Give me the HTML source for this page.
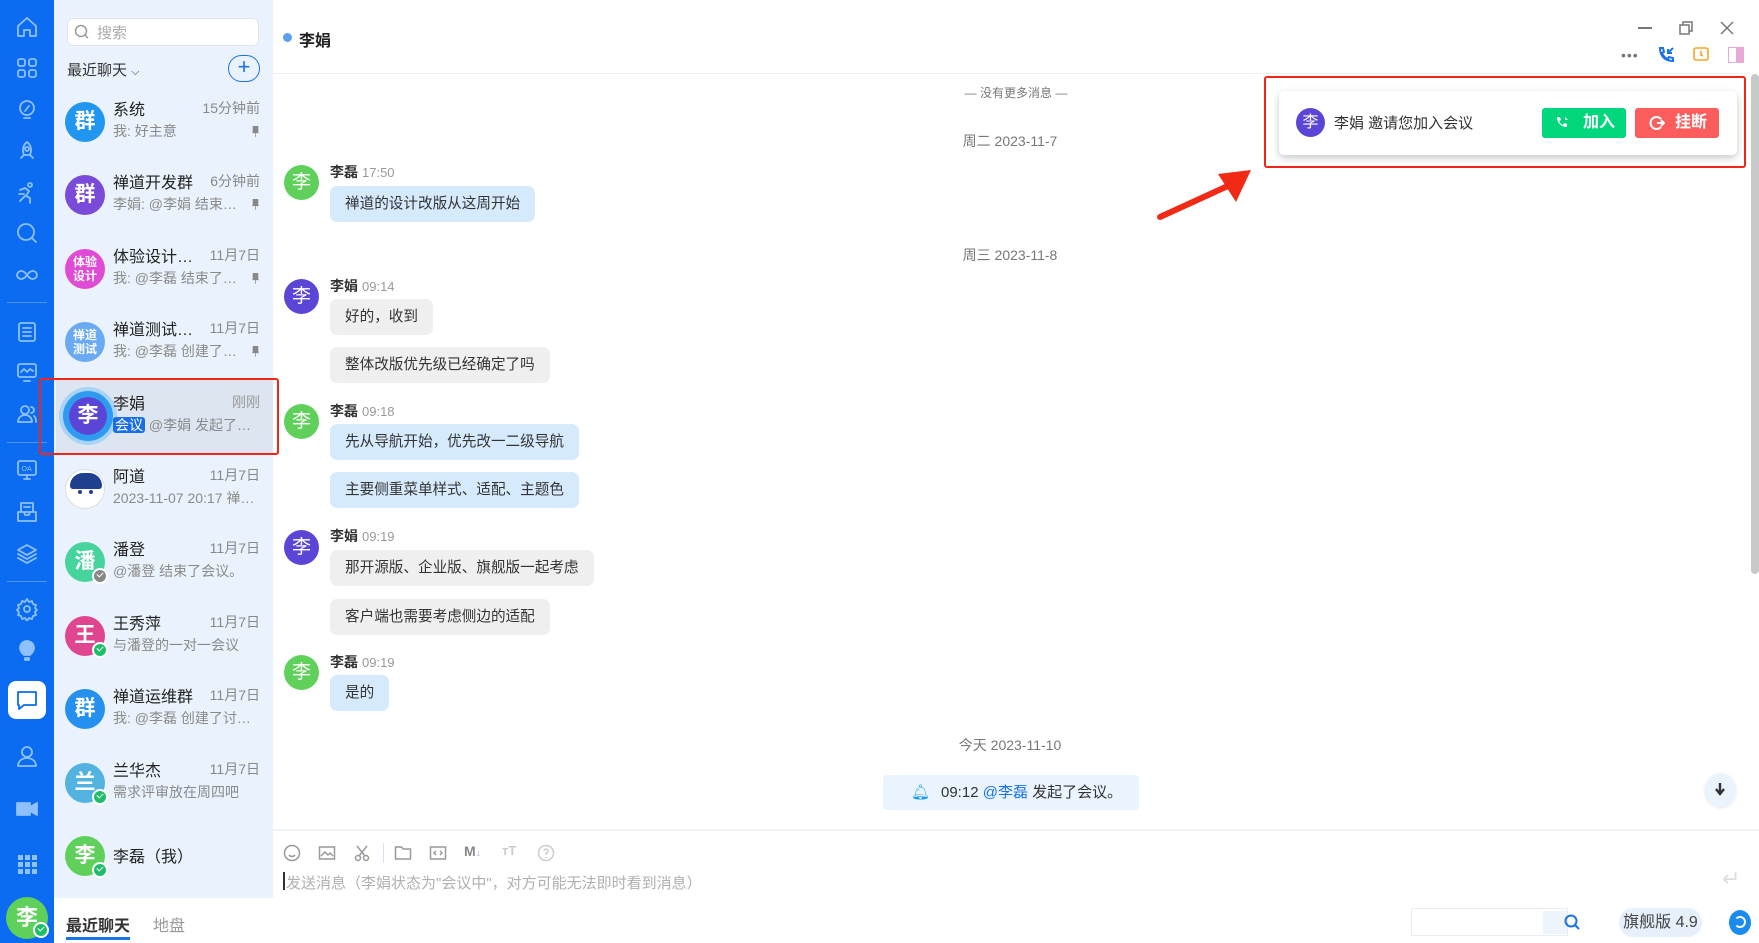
<!DOCTYPE html>
<html><head><meta charset="utf-8">
<style>
*{margin:0;padding:0;box-sizing:border-box}
body{width:1759px;height:943px;overflow:hidden;background:#fff;font-family:"Liberation Sans","Noto Sans CJK SC",sans-serif;position:relative;color:#222}
.abs{position:absolute}
#side{left:0;top:0;width:54px;height:943px;background:#0b6cf2}
#side svg{position:absolute;left:15px;width:24px;height:24px;fill:none;stroke:#8fc0ff;stroke-width:1.8;stroke-linecap:round;stroke-linejoin:round}
.sdiv{position:absolute;left:7px;width:40px;height:1px;background:#4d93f5}
#list{left:54px;top:0;width:219px;height:898px;background:#eaf3fd}
.item{position:absolute;left:0;width:219px;height:73px}
.av{position:absolute;border-radius:50%;color:#fff;text-align:center;font-weight:bold}
.item .av{left:11px;top:17px;width:40px;height:40px;line-height:40px;font-size:21px}
.nm{position:absolute;left:59px;top:11px;font-size:16px;color:#222}
.tm{position:absolute;right:13px;top:13px;font-size:14px;color:#888}
.pv{position:absolute;left:59px;top:36px;font-size:14px;color:#8a8a8a;white-space:nowrap}
.pin{position:absolute;right:14px;top:41px;width:7px;height:11px;background:#888;clip-path:polygon(10% 0,90% 0,90% 55%,100% 65%,55% 65%,55% 100%,45% 100%,45% 65%,0 65%,10% 55%)}
.badge{position:absolute;left:38px;top:43px;width:16px;height:16px;border-radius:50%;background:#1fbf6a;border:2px solid #fff}
.badge:after{content:"";position:absolute;left:3px;top:2px;width:5px;height:3px;border-left:1.5px solid #fff;border-bottom:1.5px solid #fff;transform:rotate(-45deg)}
.msgname{position:absolute;left:330px;font-size:14px;font-weight:bold;color:#333}
.msgname span{font-weight:normal;color:#999;font-size:13px;margin-left:4px}
.bub{position:absolute;left:330px;height:36px;line-height:36px;padding:0 15px;border-radius:7px;font-size:14.6px;color:#333}
.me{background:#d6eafe}.ot{background:#efefef}
.cav{position:absolute;left:284px;width:35px;height:35px;line-height:35px;font-size:19px;border-radius:50%;color:#fff;text-align:center}
.date{position:absolute;left:900px;width:220px;text-align:center;font-size:14px;color:#777}
.tb{position:absolute;top:844px;width:18px;height:18px;fill:none;stroke:#999;stroke-width:1.5}
</style></head><body>

<div id="side" class="abs">
<svg style="top:15px" viewBox="0 0 24 24"><path d="M3 11 12 3l9 8v10h-6v-6h-6v6H3z"/></svg>
<svg style="top:56px" viewBox="0 0 24 24"><rect x="3" y="3" width="7" height="7" rx="2"/><rect x="14" y="3" width="7" height="7" rx="2"/><rect x="3" y="14" width="7" height="7" rx="2"/><rect x="14" y="14" width="7" height="7" rx="2"/></svg>
<svg style="top:98px" viewBox="0 0 24 24"><circle cx="12" cy="10" r="7"/><path d="M9 20h6M10 13l4-5"/></svg>
<svg style="top:139px" viewBox="0 0 24 24"><path d="M12 3c4 3 5 8 3 13H9C7 11 8 6 12 3zM9 16l-3 3M15 16l3 3"/><circle cx="12" cy="10" r="2"/></svg>
<svg style="top:181px" viewBox="0 0 24 24"><circle cx="15" cy="4" r="2"/><path d="M5 9l5-2 4 3-3 5 4 2v5M10 15l-5 5M4 13h5"/></svg>
<svg style="top:221px" viewBox="0 0 24 24"><circle cx="11" cy="11" r="8"/><path d="M17 17l4 4"/></svg>
<svg style="top:263px" viewBox="0 0 24 24"><path d="M12 12c-2-3-4-4-6-4s-4 2-4 4 2 4 4 4 4-1 6-4zm0 0c2 3 4 4 6 4s4-2 4-4-2-4-4-4-4 1-6 4z"/></svg>
<div class="sdiv" style="top:302px"></div>
<svg style="top:320px" viewBox="0 0 24 24"><rect x="4" y="3" width="16" height="18" rx="2"/><path d="M8 8h8M8 12h8M8 16h8"/></svg>
<svg style="top:360px" viewBox="0 0 24 24"><rect x="3" y="4" width="18" height="13" rx="2"/><path d="M6 12l3-3 3 3 3-3 3 2M9 21h6"/></svg>
<svg style="top:402px" viewBox="0 0 24 24"><circle cx="10" cy="8" r="4"/><path d="M3 20c0-4 3-7 7-7s7 3 7 7zM16 5a3 3 0 0 1 0 6M19 14c2 1 2 4 2 6"/></svg>
<div class="sdiv" style="top:442px"></div>
<svg style="top:458px" viewBox="0 0 24 24"><rect x="3" y="3" width="18" height="14" rx="2"/><path d="M9 21h6M12 17v4"/><text x="6.5" y="13" font-size="7" fill="#8fc0ff" stroke="none">OA</text></svg>
<svg style="top:500px" viewBox="0 0 24 24"><path d="M6 3h12v9H6zM3 12h6l1 3h4l1-3h6v9H3zM9 7h6"/></svg>
<svg style="top:542px" viewBox="0 0 24 24"><path d="M12 3l9 5-9 5-9-5zM3 12l9 5 9-5M3 16l9 5 9-5"/></svg>
<div class="sdiv" style="top:581px"></div>
<svg style="top:597px" viewBox="0 0 24 24"><circle cx="12" cy="12" r="3"/><path d="M12 2l2 3 3-1 1 3 3 1-1 3 2 2-2 2 1 3-3 1-1 3-3-1-2 3-2-3-3 1-1-3-3-1 1-3-2-2 2-2-1-3 3-1 1-3 3 1z"/></svg>
<svg style="top:639px" viewBox="0 0 24 24"><path d="M12 2c4 0 7 3 7 7 0 3-2 5-4 7H9C7 14 5 12 5 9c0-4 3-7 7-7zM10 19h4v2h-4z" fill="#8fc0ff"/></svg>
<div class="abs" style="left:8px;top:681px;width:38px;height:38px;border-radius:8px;background:#fff"></div>
<svg style="top:688px;stroke:#0b6cf2" viewBox="0 0 24 24"><path d="M3 4h18v13H9l-5 4v-4H3z"/></svg>
<svg style="top:744px" viewBox="0 0 24 24"><circle cx="12" cy="8" r="5"/><path d="M3 22c0-5 4-8 9-8s9 3 9 8z"/></svg>
<svg style="top:797px" viewBox="0 0 24 24"><path d="M2 6h13v12H2zM15 10l7-4v12l-7-4z" fill="#8fc0ff"/></svg>
<svg style="top:852px" viewBox="0 0 24 24"><g fill="#8fc0ff" stroke="none"><rect x="3" y="3" width="5" height="5"/><rect x="10" y="3" width="5" height="5"/><rect x="17" y="3" width="5" height="5"/><rect x="3" y="10" width="5" height="5"/><rect x="10" y="10" width="5" height="5"/><rect x="17" y="10" width="5" height="5"/><rect x="3" y="17" width="5" height="5"/><rect x="10" y="17" width="5" height="5"/><rect x="17" y="17" width="5" height="5"/></g></svg>
<div class="av" style="left:6px;top:897px;width:42px;height:42px;line-height:42px;font-size:22px;background:#5fd05a">李</div>
<div class="badge" style="left:33px;top:922px"></div>
</div>

<div id="list" class="abs">
<div class="abs" style="left:13px;top:18px;width:192px;height:28px;background:#fff;border-radius:6px;border:1px solid #dde6f0"></div>
<svg class="abs" style="left:20px;top:24px" width="16" height="16" viewBox="0 0 16 16" fill="none" stroke="#999" stroke-width="1.5"><circle cx="7" cy="7" r="5.5"/><path d="M11 11l3 3"/></svg>
<div class="abs" style="left:43px;top:22px;font-size:15px;color:#aaa">搜索</div>
<div class="abs" style="left:13px;top:59px;font-size:15px;color:#333">最近聊天 <span style="font-size:11px">⌵</span></div>
<div class="abs" style="left:174px;top:55px;width:32px;height:27px;border-radius:14px;border:1.5px solid #1a73e8;color:#1a73e8;text-align:center;line-height:22px;font-size:22px">+</div>

<div class="item" style="top:85px"><div class="av" style="background:#2196f0">群</div><div class="nm">系统</div><div class="tm">15分钟前</div><div class="pv">我: 好主意</div><div class="pin"></div></div>
<div class="item" style="top:158px"><div class="av" style="background:#7a4bd8">群</div><div class="nm">禅道开发群</div><div class="tm">6分钟前</div><div class="pv">李娟: @李娟 结束…</div><div class="pin"></div></div>
<div class="item" style="top:232px"><div class="av" style="background:#e04bd6;font-size:12px;line-height:14px;padding-top:6px">体验<br>设计</div><div class="nm">体验设计…</div><div class="tm">11月7日</div><div class="pv">我: @李磊 结束了…</div><div class="pin"></div></div>
<div class="item" style="top:305px"><div class="av" style="background:#6aaaf2;font-size:12px;line-height:14px;padding-top:6px">禅道<br>测试</div><div class="nm">禅道测试…</div><div class="tm">11月7日</div><div class="pv">我: @李磊 创建了…</div><div class="pin"></div></div>
<div class="item" style="top:379px;left:2px;width:217px;height:74px;background:#dde6f0"><div class="av" style="left:3px;top:8px;width:58px;height:58px;background:#a9d3f8"></div><div class="av" style="left:7px;top:12px;width:50px;height:50px;background:#2d9cf0"></div><div class="av" style="background:#5b45d6;left:13px;top:18px;width:38px;height:38px;line-height:38px">李</div><div class="nm" style="left:57px">李娟</div><div class="tm" style="color:#999">刚刚</div><div class="pv" style="left:57px"><span style="background:#1a6ee6;color:#fff;border-radius:3px;padding:0 2px;font-size:14px">会议</span> @李娟 发起了…</div></div>
<div class="abs" style="left:-15px;top:378px;width:240px;height:77px;border:2px solid #f0261b;border-radius:3px"></div>
<div class="item" style="top:452px"><div class="av" style="background:#fff;border:1px solid #ddd;overflow:hidden"><div style="position:absolute;left:4px;top:3px;width:32px;height:16px;border-radius:16px 16px 4px 4px;background:#1f3f8f"></div><div style="position:absolute;left:12px;top:20px;width:4px;height:4px;border-radius:50%;background:#1f3f8f"></div><div style="position:absolute;left:23px;top:20px;width:4px;height:4px;border-radius:50%;background:#1f3f8f"></div></div><div class="nm">阿道</div><div class="tm">11月7日</div><div class="pv">2023-11-07 20:17 禅…</div></div>
<div class="item" style="top:525px"><div class="av" style="background:#46d39c">潘</div><div class="badge" style="background:#888"></div><div class="nm">潘登</div><div class="tm">11月7日</div><div class="pv">@潘登 结束了会议。</div></div>
<div class="item" style="top:599px"><div class="av" style="background:#e0468f">王</div><div class="badge"></div><div class="nm">王秀萍</div><div class="tm">11月7日</div><div class="pv">与潘登的一对一会议</div></div>
<div class="item" style="top:672px"><div class="av" style="background:#2590ee">群</div><div class="nm">禅道运维群</div><div class="tm">11月7日</div><div class="pv">我: @李磊 创建了讨…</div></div>
<div class="item" style="top:746px"><div class="av" style="background:#52b2e0">兰</div><div class="badge"></div><div class="nm">兰华杰</div><div class="tm">11月7日</div><div class="pv">需求评审放在周四吧</div></div>
<div class="item" style="top:819px"><div class="av" style="background:#5fd05a">李</div><div class="badge"></div><div class="nm" style="top:24px">李磊（我）</div></div>
</div>

<div class="abs" style="left:66px;top:912px;font-size:16px;font-weight:bold;color:#333">最近聊天</div>
<div class="abs" style="left:66px;top:937px;width:64px;height:3px;background:#1a73e8"></div>
<div class="abs" style="left:153px;top:912px;font-size:16px;color:#999">地盘</div>

<div class="abs" style="left:283px;top:33px;width:9px;height:9px;border-radius:50%;background:#5aa0f0"></div>
<div class="abs" style="left:299px;top:27px;font-size:16px;font-weight:bold;color:#222">李娟</div>
<div class="abs" style="left:1638px;top:27px;width:14px;height:2px;background:#777"></div>
<svg class="abs" style="left:1679px;top:21px" width="14" height="14" viewBox="0 0 14 14" fill="none" stroke="#777" stroke-width="1.5"><rect x="1" y="4" width="9" height="9"/><path d="M4 4V1h9v9h-3"/></svg>
<svg class="abs" style="left:1720px;top:21px" width="14" height="14" viewBox="0 0 14 14" stroke="#777" stroke-width="1.5"><path d="M1 1l12 12M13 1L1 13"/></svg>
<div class="abs" style="left:1621px;top:47px;font-size:14px;color:#777;letter-spacing:1px">•••</div>
<svg class="abs" style="left:1657px;top:46px" width="18" height="18" viewBox="0 0 18 18" fill="none" stroke="#1a73e8" stroke-width="2"><path d="M3 2l3 0 1 4-2 1c1 3 3 5 6 6l1-2 4 1v3c-8 0-13-5-13-13zM16 2l-5 5M11 3v4h4"/></svg>
<svg class="abs" style="left:1692px;top:46px" width="18" height="18" viewBox="0 0 18 18" fill="none" stroke="#f5a623" stroke-width="1.6"><rect x="2" y="2" width="14" height="12" rx="2"/><path d="M9 5v4l2 1"/></svg>
<div class="abs" style="left:1728px;top:47px;width:16px;height:16px;border:1.5px solid #e9a9d6;background:linear-gradient(90deg,#fff 50%,#e9a9d6 50%)"></div>
<div class="abs" style="left:273px;top:73px;width:1478px;height:1px;background:#eef1f5"></div>
<div class="abs" style="left:1751px;top:74px;width:8px;height:500px;background:#c8c8c8;border-radius:4px"></div>

<div class="date" style="top:84px;left:906px;font-size:12px">— 没有更多消息 —</div>
<div class="date" style="top:131px">周二 2023-11-7</div>
<div class="cav" style="top:165px;background:#5fd05a">李</div>
<div class="msgname" style="top:162px">李磊<span>17:50</span></div>
<div class="bub me" style="top:186px">禅道的设计改版从这周开始</div>
<div class="date" style="top:245px">周三 2023-11-8</div>
<div class="cav" style="top:279px;background:#5b45d6">李</div>
<div class="msgname" style="top:276px">李娟<span>09:14</span></div>
<div class="bub ot" style="top:299px">好的，收到</div>
<div class="bub ot" style="top:347px">整体改版优先级已经确定了吗</div>
<div class="cav" style="top:404px;background:#5fd05a">李</div>
<div class="msgname" style="top:401px">李磊<span>09:18</span></div>
<div class="bub me" style="top:424px">先从导航开始，优先改一二级导航</div>
<div class="bub me" style="top:472px">主要侧重菜单样式、适配、主题色</div>
<div class="cav" style="top:530px;background:#5b45d6">李</div>
<div class="msgname" style="top:526px">李娟<span>09:19</span></div>
<div class="bub ot" style="top:550px">那开源版、企业版、旗舰版一起考虑</div>
<div class="bub ot" style="top:599px">客户端也需要考虑侧边的适配</div>
<div class="cav" style="top:655px;background:#5fd05a">李</div>
<div class="msgname" style="top:652px">李磊<span>09:19</span></div>
<div class="bub me" style="top:675px">是的</div>
<div class="date" style="top:735px">今天 2023-11-10</div>
<div class="abs" style="left:883px;top:775px;width:256px;height:35px;background:#eaf4fe;border-radius:4px;font-size:15px;line-height:35px;padding-left:58px;color:#333"><span style="position:absolute;left:28px;color:#1a9cf0">🔔︎</span>09:12 <span style="color:#1a73e8">@李磊</span> 发起了会议。</div>
<div class="abs" style="left:1705px;top:773px;width:31px;height:34px;border-radius:50%;background:#eaf4fe;box-shadow:0 1px 3px rgba(0,0,0,.1)"></div>
<svg class="abs" style="left:1713px;top:782px" width="14" height="14" viewBox="0 0 14 14"><path d="M7 1v10M3 7l4 5 4-5" stroke="#333" stroke-width="2.4" fill="none"/></svg>

<div class="abs" style="left:273px;top:829px;width:1486px;height:2px;background:#f0f4f8"></div>
<svg class="tb" style="left:283px" viewBox="0 0 18 18"><circle cx="9" cy="9" r="7.5"/><path d="M6 11c1.5 2 4.5 2 6 0"/></svg>
<svg class="tb" style="left:318px" viewBox="0 0 18 18"><rect x="1.5" y="3" width="15" height="12"/><path d="M3 12l4-4 3 3 2-2 3 3"/></svg>
<svg class="tb" style="left:353px" viewBox="0 0 18 18"><circle cx="5" cy="14" r="2.5"/><circle cx="13" cy="14" r="2.5"/><path d="M6 12L14 2M12 12L4 2"/></svg>
<div class="abs" style="left:383px;top:843px;width:1px;height:20px;background:#e6d8f5"></div>
<svg class="tb" style="left:394px" viewBox="0 0 18 18"><path d="M1.5 3h6l1.5 2h7.5v10h-15z"/></svg>
<svg class="tb" style="left:429px" viewBox="0 0 18 18"><rect x="1.5" y="3" width="15" height="12"/><path d="M7 7l-2 2 2 2M11 7l2 2-2 2"/></svg>
<div class="abs" style="left:464px;top:843px;font-size:14px;font-weight:bold;color:#888">M<span style="font-size:10px;color:#b8a0e0">↓</span></div>
<div class="abs" style="left:502px;top:843px;font-size:13px;color:#ccc;font-weight:bold">ᴛT</div>
<svg class="tb" style="left:537px;stroke:#ccc" viewBox="0 0 18 18"><circle cx="9" cy="9" r="7.5"/><path d="M7 7a2 2 0 1 1 2 2v2M9 13v1"/></svg>
<div class="abs" style="left:283px;top:872px;width:2px;height:18px;background:#333"></div>
<div class="abs" style="left:286px;top:872px;font-size:15px;color:#b0b0b0">发送消息（李娟状态为"会议中"，对方可能无法即时看到消息）</div>
<div class="abs" style="left:1722px;top:866px;font-size:22px;color:#ddd">↵</div>
<div class="abs" style="left:1411px;top:908px;width:157px;height:28px;border:1px solid #e8edf2;background:#fff"></div>
<div class="abs" style="left:1543px;top:911px;width:24px;height:23px;background:#eef4fc"></div>
<svg class="abs" style="left:1563px;top:913px" width="18" height="18" viewBox="0 0 18 18" fill="none" stroke="#1a73e8" stroke-width="2"><circle cx="8" cy="8" r="5.5"/><path d="M12 12l4 4"/></svg>
<div class="abs" style="left:1619px;top:908px;width:83px;height:29px;border-radius:14px;background:#e6f0fb;font-size:16px;line-height:29px;text-align:center;color:#444">旗舰版 4.9</div>
<div class="abs" style="left:1729px;top:910px;width:22px;height:25px;border-radius:50%;background:#1a8cf0"></div>
<div class="abs" style="left:1734px;top:916px;width:12px;height:12px;border-radius:50%;border:2px solid #fff;border-left-color:transparent"></div>

<div class="abs" style="left:1264px;top:76px;width:482px;height:92px;border:2.5px solid #f0261b;border-radius:3px"></div>
<div class="abs" style="left:1279px;top:91px;width:458px;height:64px;background:#fff;border-radius:5px;box-shadow:0 3px 8px rgba(0,0,0,.22)"></div>
<div class="av" style="left:1296px;top:108px;width:29px;height:29px;line-height:29px;font-size:16px;background:#5b45d6;font-weight:normal">李</div>
<div class="abs" style="left:1334px;top:112px;font-size:15px;color:#333">李娟 邀请您加入会议</div>
<div class="abs" style="left:1542px;top:108px;width:84px;height:30px;border-radius:3px;background:#00d67c;color:#fff;font-size:16px;font-weight:bold;line-height:30px;padding-left:41px">加入</div>
<svg class="abs" style="left:1556px;top:116px" width="14" height="14" viewBox="0 0 14 14" fill="#fff"><path d="M1 1h3l1 3-2 1c1 2 2 3 4 4l1-2 3 1v3C5 11 1 7 1 1zM9 1v3h3"/></svg>
<div class="abs" style="left:1635px;top:108px;width:84px;height:30px;border-radius:3px;background:#fb5d5d;color:#fff;font-size:16px;font-weight:bold;line-height:30px;padding-left:40px">挂断</div>
<svg class="abs" style="left:1649px;top:115px" width="16" height="16" viewBox="0 0 16 16" fill="none" stroke="#fff" stroke-width="2"><path d="M12 4A6 6 0 1 0 12 12M8 8h7M12 5l3 3-3 3"/></svg>

<svg class="abs" style="left:1150px;top:160px" width="110" height="65" viewBox="0 0 110 65"><path d="M10 57L80 25" stroke="#f02a14" stroke-width="6" stroke-linecap="round"/><path d="M101 10L68 14 86 42z" fill="#f02a14"/></svg>
</body></html>
